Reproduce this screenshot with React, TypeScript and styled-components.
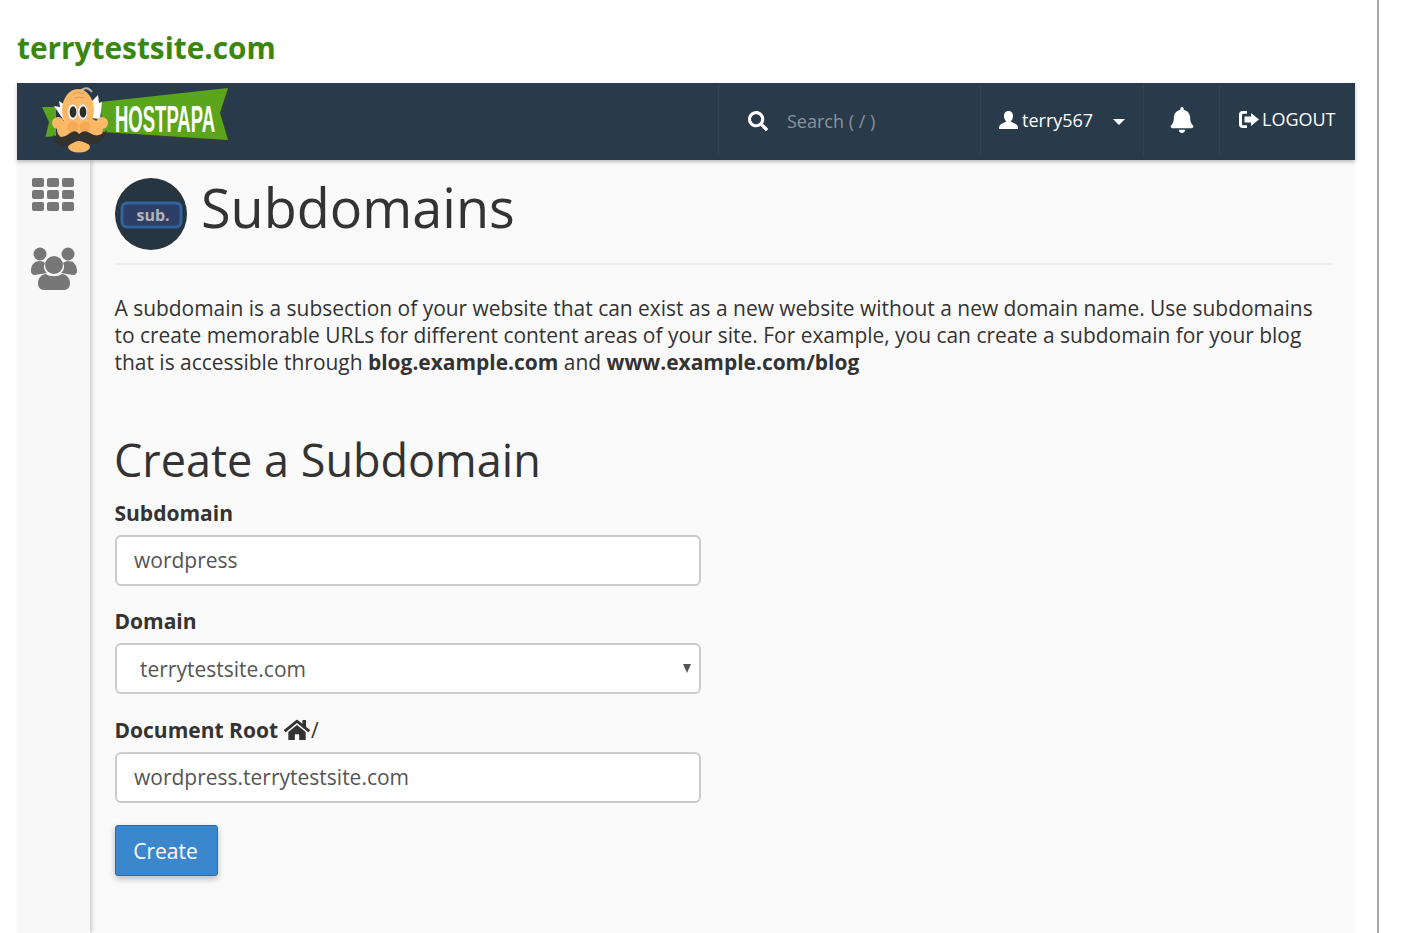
import styled, { createGlobalStyle } from "styled-components";
import { FaBell, FaHome, FaSearch } from "react-icons/fa";

const GlobalStyle = createGlobalStyle`
  html, body {
    margin: 0;
    background: #fff;
    font-family: "Open Sans", "Liberation Sans", sans-serif;
    color: #333;
  }
  * { box-sizing: border-box; }
`;

const Page = styled.div`
  width: 1379px;
  height: 933px;
  overflow: hidden;
  padding-left: 17px;
  padding-right: 22px;
  border-right: 2px solid #a9a9a9;
`;

const SiteName = styled.h1`
  margin: 0;
  height: 83px;
  padding-top: 26px;
  font-size: 29.8px;
  line-height: 44px;
  font-weight: 700;
  color: #3b860f;
`;

const Navbar = styled.header`
  display: flex;
  align-items: stretch;
  height: 77px;
  background: #293a4a;
  box-shadow: 0 2px 4px rgba(0, 0, 0, 0.25);
  position: relative;
  z-index: 2;
`;

const Brand = styled.div`
  flex: 1;
  padding: 3px 0 0 23px;
`;

const NavCell = styled.div<{ $width: number }>`
  display: flex;
  align-items: center;
  width: ${(p) => p.$width}px;
  height: 73px;
  border-left: 1px solid #314353;
  color: #fff;
  font-size: 18px;
`;

const SearchCell = styled(NavCell)`
  padding-left: 29px;
  gap: 19px;
  color: #8a949d;
  padding-top: 3px;
`;

const UserCell = styled(NavCell)`
  padding-left: 18px;
  gap: 4px;
`;

const BellCell = styled(NavCell)`
  justify-content: center;
  padding-top: 1px;
`;

const LogoutCell = styled(NavCell)`
  padding-left: 19px;
  padding-bottom: 1px;
  gap: 3px;
`;

const Caret = styled.span`
  margin-left: 16px;
  margin-top: 4px;
  border-left: 6px solid transparent;
  border-right: 6px solid transparent;
  border-top: 6px solid #fff;
`;

const Body = styled.div`
  display: flex;
  height: 773px;
  background: #fafafa;
`;

const Sidebar = styled.nav`
  width: 73px;
  flex: none;
  display: flex;
  flex-direction: column;
  align-items: center;
  gap: 36px;
  padding-top: 18px;
  background: #f8f8f8;
  box-shadow: 2px 0 4px rgba(0, 0, 0, 0.18);
  svg:first-child { margin-left: -1px; }
  svg:last-child { margin-left: 1px; }
`;

const Main = styled.main`
  flex: 1;
  padding: 18px 23px 0 25px;
`;

const PageHeader = styled.div`
  display: flex;
  align-items: flex-start;
  gap: 14px;
  height: 87px;
  border-bottom: 2px solid #eee;
`;

const PageTitle = styled.h1`
  margin: 0;
  font-size: 54px;
  line-height: 58px;
  font-weight: 400;
  color: #333;
`;

const Intro = styled.p`
  margin: 30px 0 0 -0.5px;
  font-size: 20.95px;
  line-height: 27px;
  color: #333;
  b { font-weight: 700; }
`;

const SectionTitle = styled.h2`
  margin: 57px 0 0 -1px;
  font-size: 45px;
  line-height: 54px;
  font-weight: 400;
  color: #333;
`;

const Field = styled.div`
  display: flex;
  flex-direction: column;
  width: 586px;
  margin-bottom: 9px;
`;

const Label = styled.label`
  display: flex;
  align-items: center;
  gap: 6px;
  height: 27px;
  margin: 12px 0 9px -0.5px;
  font-size: 21px;
  font-weight: 700;
  color: #333;
  span { font-weight: 400; margin-left: -5px; }
`;

const Input = styled.input`
  height: 51px;
  padding: 0 17px 2px;
  border: 2px solid #ccc;
  border-radius: 6px;
  background: #fff;
  font: 400 21px "Open Sans", sans-serif;
  color: #555;
`;

const SelectWrap = styled.div`
  position: relative;
  display: flex;
  margin-bottom: 1px;
  &::after {
    content: "";
    position: absolute;
    top: 21px;
    right: 10px;
    border-left: 4.5px solid transparent;
    border-right: 4.5px solid transparent;
    border-top: 9px solid #555;
    pointer-events: none;
  }
`;

const Select = styled.select`
  flex: 1;
  appearance: none;
  height: 51px;
  padding: 0 23px;
  border: 2px solid #ccc;
  border-radius: 6px;
  background: #fff;
  font: 400 21px "Open Sans", sans-serif;
  color: #555;
`;

const CreateButton = styled.button`
  display: block;
  width: 103px;
  height: 51px;
  margin-top: 22px;
  padding: 0 2px 0 0;
  border: 1px solid #2e6da4;
  border-radius: 3px;
  background: #3a87cd;
  color: #fff;
  font: 400 21px "Open Sans", sans-serif;
  box-shadow: 0 3px 6px rgba(0, 0, 0, 0.25);
`;

const HostPapaLogo = () => (
  <svg width="192" height="70" viewBox="0 0 192 70">
    <path d="M2 21 L16 21 L16 50 L5.5 51 L9 36 Z" fill="#5ba51c" />
    <path d="M62 18 L190 4 L182 29 L190 56 L65 48 Z" fill="#3d3d36" opacity="0.55" />
    <path d="M60 16 L188 2 L180 27 L188 54 L63 46 Z" fill="#5ba51c" />
    <path d="M25 36 L14 20 L20 21 L19 15 L25 19 Z" fill="#fff" />
    <path d="M50 32 L52 15 L58 9 L59 17 L62 16 L60 33 Z" fill="#fff" />
    <path d="M40 5 Q47 -1 52 6" fill="none" stroke="#b5b5ae" strokeWidth="2" />
    <ellipse cx="38" cy="24" rx="16" ry="21" fill="#fbb968" />
    <circle cx="18" cy="37" r="6" fill="#fbb968" />
    <circle cx="62" cy="37" r="6" fill="#fbb968" />
    <ellipse cx="40" cy="44" rx="23" ry="13" fill="#fbb968" />
    <ellipse cx="39" cy="61" rx="11" ry="5.5" fill="#fbb968" />
    <path d="M33 8 Q38 5 44 8 M35 12 Q39 10 44 12" fill="none" stroke="#d9995a" strokeWidth="1" />
    <ellipse cx="32.7" cy="26" rx="5" ry="8" fill="#fff" stroke="#e9a45a" strokeWidth="0.6" />
    <ellipse cx="42.7" cy="26" rx="5" ry="8" fill="#fff" stroke="#e9a45a" strokeWidth="0.6" />
    <ellipse cx="33" cy="26" rx="3.4" ry="5.8" fill="#2f2d2a" />
    <ellipse cx="43" cy="26" rx="3.4" ry="5.8" fill="#2f2d2a" />
    <circle cx="33" cy="41" r="5.5" fill="#f4a957" />
    <circle cx="45" cy="41" r="5.5" fill="#f4a957" />
    <path d="M13 49 Q22 54 30 47 Q36 43 39 48 Q44 43 50 47 Q58 53 67 44 Q63 60 48 58 Q42 55 39 55 Q35 55 28 60 Q15 63 13 49 Z" fill="#33322f" />
    <text
      transform="translate(75 46) scale(0.5 1)"
      fill="#fff"
      fontFamily="'Liberation Sans', sans-serif"
      fontWeight="700"
      fontSize="37"
    >
      HOSTPAPA
    </text>
  </svg>
);

const UserIcon = () => (
  <svg width="19" height="18" viewBox="0 0 19 18" fill="#fff">
    <path d="M9.5 0 C12.6 0 14 2.2 14 5 C14 7.3 13 9.3 11.9 10.3 C12.2 11.8 18.6 12.3 19 16.3 L19 18 L0 18 L0 16.3 C.4 12.3 6.8 11.8 7.1 10.3 C6 9.3 5 7.3 5 5 C5 2.2 6.4 0 9.5 0 Z" />
  </svg>
);

const LogoutIcon = () => (
  <svg width="20" height="17" viewBox="0 0 20 17" fill="#fff">
    <path d="M8 0 L8 2.8 L4.5 2.8 C3.4 2.8 3 3.3 3 4.3 L3 12.7 C3 13.7 3.4 14.2 4.5 14.2 L8 14.2 L8 17 L3.5 17 C1.4 17 0 15.6 0 13.5 L0 3.5 C0 1.4 1.4 0 3.5 0 Z" />
    <path d="M12 2 L20 8.5 L12 15 L12 11.5 L5.5 11.5 L5.5 5.5 L12 5.5 Z" />
  </svg>
);

const GridIcon = () => (
  <svg width="42" height="33" viewBox="0 0 42 33" fill="#777">
    {[0, 12, 24].map((y) =>
      [0, 15, 30].map((x) => (
        <rect key={`${x}-${y}`} x={x} y={y} width="12" height="9" rx="2" />
      )),
    )}
  </svg>
);

const UsersIcon = () => (
  <svg width="46" height="43" viewBox="0 0 46 43" fill="#777">
    <circle cx="9" cy="7" r="6.5" />
    <circle cx="37" cy="7" r="6.5" />
    <path d="M0 24 C0 17 4 14 9 14 C11 14 13 15 14 16 C12 19 13 24 16 26 L4 28 C1 28 0 26 0 24 Z" />
    <path d="M46 24 C46 17 42 14 37 14 C35 14 33 15 32 16 C34 19 33 24 30 26 L42 28 C45 28 46 26 46 24 Z" />
    <circle cx="23" cy="18" r="9" />
    <path d="M7 36 C7 31 11 27 15 27 C19 30 27 30 31 27 C35 27 39 31 39 36 C39 40 37 43 33 43 L13 43 C9 43 7 40 7 36 Z" />
  </svg>
);

const SubIcon = () => (
  <svg width="72" height="72" viewBox="0 0 72 72">
    <circle cx="36" cy="36" r="36" fill="#273540" />
    <rect x="7" y="25" width="59" height="24" rx="5" fill="#2d3f66" stroke="#2f659c" strokeWidth="3" />
    <text
      x="38"
      y="43"
      textAnchor="middle"
      fill="#b4b4b4"
      fontFamily="'Open Sans', sans-serif"
      fontWeight="700"
      fontSize="16"
    >
      sub.
    </text>
  </svg>
);

const App = () => {
  return (
    <Page>
      <GlobalStyle />
      <SiteName>terrytestsite.com</SiteName>
      <Navbar>
        <Brand>
          <HostPapaLogo />
        </Brand>
        <SearchCell $width={262}>
          <FaSearch size={20} color="#fff" />
          <span>Search ( / )</span>
        </SearchCell>
        <UserCell $width={163}>
          <UserIcon />
          <span>terry567</span>
          <Caret />
        </UserCell>
        <BellCell $width={76}>
          <FaBell size={26} />
        </BellCell>
        <LogoutCell $width={136}>
          <LogoutIcon />
          <span>LOGOUT</span>
        </LogoutCell>
      </Navbar>
      <Body>
        <Sidebar>
          <GridIcon />
          <UsersIcon />
        </Sidebar>
        <Main>
          <PageHeader>
            <SubIcon />
            <PageTitle>Subdomains</PageTitle>
          </PageHeader>
          <Intro>
            A subdomain is a subsection of your website that can exist as a new website without a new domain name. Use
            subdomains to create memorable URLs for different content areas of your site. For example, you can create a
            subdomain for your blog that is accessible through <b>blog.example.com</b> and <b>www.example.com/blog</b>
          </Intro>
          <SectionTitle>Create a Subdomain</SectionTitle>
          <Field>
            <Label>Subdomain</Label>
            <Input defaultValue="wordpress" />
          </Field>
          <Field>
            <Label>Domain</Label>
            <SelectWrap>
              <Select defaultValue="terrytestsite.com">
                <option>terrytestsite.com</option>
              </Select>
            </SelectWrap>
          </Field>
          <Field>
            <Label>
              Document Root <FaHome size={26} color="#333" />
              <span>/</span>
            </Label>
            <Input defaultValue="wordpress.terrytestsite.com" />
          </Field>
          <CreateButton>Create</CreateButton>
        </Main>
      </Body>
    </Page>
  );
};

export default App;
